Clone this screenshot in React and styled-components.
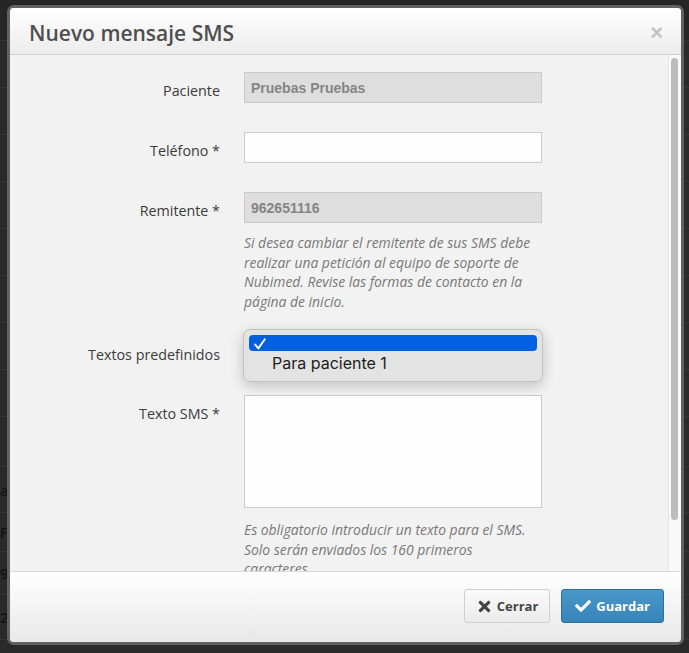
import React from 'react';
import styled, { createGlobalStyle, css } from 'styled-components';
import { FaTimes, FaCheck } from 'react-icons/fa';

const GlobalStyle = createGlobalStyle`
  html, body { margin: 0; padding: 0; height: 100%; overflow: hidden; background: #2a2a2a; }
  #root { height: 100%; }
  *, *::before, *::after { box-sizing: border-box; }
`;

const Page = styled.div`
  position: relative;
  height: 100vh;
  background: #2a2a2a;
  font-family: "Open Sans", sans-serif;
  overflow: hidden;
`;

const TopBar = styled.div`
  height: 41px;
  background: #262626;
  border-bottom: 1px solid #353535;
`;

const BgRow = styled.div`
  height: ${p => p.$h}px;
  border-bottom: 1px solid #363636;
  display: flex;
  align-items: center;
  color: #121212;
  font-size: 15px;
  font-weight: 600;
  white-space: nowrap;
`;

const Modal = styled.div`
  position: absolute;
  top: 5px;
  left: 7px;
  width: 677px;
  height: 640px;
  border: 3px solid #626262;
  border-radius: 7px;
  display: flex;
  flex-direction: column;
  overflow: hidden;
  background: #f2f2f2;
`;

const Header = styled.div`
  flex: none;
  height: 47px;
  display: flex;
  align-items: center;
  justify-content: space-between;
  padding: 3px 18px 0 19px;
  background: linear-gradient(#ffffff, #ececec);
  border-bottom: 1px solid #cecece;
`;

const Title = styled.h4`
  margin: 0;
  font-family: "Open Sans", sans-serif;
  font-size: 21px;
  font-weight: 600;
  line-height: 24px;
  color: #4f4f4f;
`;

const Close = styled.button`
  border: 0;
  background: none;
  padding: 0;
  font-family: "Liberation Sans", Arial, sans-serif;
  font-size: 22px;
  font-weight: 700;
  line-height: 22px;
  color: #c2c2c2;
`;

const Body = styled.div`
  position: relative;
  flex: 1;
  overflow: hidden;
  background: #f2f2f2;
`;

const ScrollTrack = styled.div`
  position: absolute;
  top: 0;
  right: 0;
  bottom: 0;
  width: 13px;
  background: #f9f9f9;
  border-left: 1px solid #e4e4e4;
  padding: 3px 0 0 2px;
`;

const ScrollThumb = styled.div`
  width: 7px;
  height: 462px;
  border-radius: 4px;
  background: #bcbcbc;
`;

const Form = styled.div`
  padding: 17px 0 45px 15px;
`;

const Group = styled.div`
  display: grid;
  grid-template-columns: 195px 298px;
  column-gap: 24px;
  margin-bottom: ${p => p.$mb || 0}px;
`;

const Label = styled.label`
  text-align: right;
  padding-top: 9px;
  font-size: 14.3px;
  line-height: 20px;
  color: #3b3b3b;
`;

const Input = styled.input`
  display: block;
  width: 298px;
  height: 31px;
  margin: 0;
  border: 1px solid #cbcbcb;
  border-radius: 0;
  padding: 0 6px;
  outline: none;
  background: ${p => (p.$locked ? '#dedede' : '#fdfdfd')};
  font-family: "Liberation Sans", Arial, sans-serif;
  font-weight: 700;
  font-size: 14px;
  color: #858585;
`;

const TextArea = styled.textarea`
  display: block;
  width: 298px;
  height: 113px;
  margin: 0;
  border: 1px solid #cbcbcb;
  border-radius: 0;
  background: #fdfdfd;
  resize: none;
  outline: none;
`;

const Help = styled.p`
  margin: ${p => p.$mt}px 0 0;
  font-style: italic;
  font-size: 13.9px;
  line-height: 19.5px;
  color: #787878;
`;

const SelectBox = styled.div`
  position: relative;
  width: 298px;
  height: 31px;
  border: 1px solid #cbcbcb;
  background: #fdfdfd;
`;

const Menu = styled.div`
  position: absolute;
  left: -2px;
  top: -8px;
  width: 300px;
  height: 53px;
  padding: 5px;
  background: #e3e3e3;
  border: 1px solid #c2c2c2;
  border-radius: 7px;
  box-shadow: 0 4px 14px rgba(0, 0, 0, 0.2);
  font-family: Inter, "Liberation Sans", sans-serif;
`;

const MenuItem = styled.div`
  position: relative;
  height: ${p => p.$h}px;
  line-height: ${p => p.$h}px;
  border-radius: 4px;
  padding-left: 23px;
  font-size: 16px;
  background: ${p => (p.$active ? '#0060df' : 'transparent')};
  color: ${p => (p.$active ? '#ffffff' : '#1d1d1d')};
`;

const Tick = styled.svg`
  position: absolute;
  left: 5px;
  top: 3px;
`;

const Footer = styled.div`
  flex: none;
  height: 71px;
  border-top: 1px solid #d8d8d8;
  background: linear-gradient(#ffffff, #e8e8e8);
  display: flex;
  justify-content: flex-end;
  align-items: flex-start;
  gap: 11px;
  padding: 17px 17px 0 0;
`;

const Button = styled.button`
  height: 34px;
  padding: 0 ${p => (p.$primary ? 13 : 11)}px;
  border-radius: 3px;
  display: inline-flex;
  align-items: center;
  gap: ${p => (p.$primary ? 5 : 4)}px;
  font-family: "Open Sans", sans-serif;
  font-weight: 700;
  font-size: 13px;
  ${p =>
    p.$primary
      ? css`
          background: linear-gradient(#4898cb, #3884b8);
          border: 1px solid #2f6f9c;
          color: #ffffff;
        `
      : css`
          background: linear-gradient(#fafafa, #ebebeb);
          border: 1px solid #cfcfcf;
          color: #444444;
        `}
`;

export default function App() {
  return (
    <Page>
      <GlobalStyle />
      <TopBar />
      {[47, 47, 47, 47, 47, 47, 47, 47, 50].map((h, i) => (
        <BgRow key={i} $h={h} />
      ))}
      <BgRow $h={46}>ac</BgRow>
      <BgRow $h={39}>Fe</BgRow>
      <BgRow $h={43}>9</BgRow>
      <BgRow $h={45}>2</BgRow>

      <Modal>
        <Header>
          <Title>Nuevo mensaje SMS</Title>
          <Close>×</Close>
        </Header>
        <Body>
          <Form>
            <Group $mb={29}>
              <Label>Paciente</Label>
              <Input $locked readOnly value="Pruebas Pruebas" />
            </Group>
            <Group $mb={29}>
              <Label>Teléfono *</Label>
              <Input readOnly value="" />
            </Group>
            <Group $mb={25}>
              <Label>Remitente *</Label>
              <div>
                <Input $locked readOnly value="962651116" />
                <Help $mt={10}>
                  Si desea cambiar el remitente de sus SMS debe realizar una petición al equipo de
                  soporte de Nubimed. Revise las formas de contacto en la página de inicio.
                </Help>
              </div>
            </Group>
            <Group $mb={28}>
              <Label>Textos predefinidos</Label>
              <SelectBox>
                <Menu>
                  <MenuItem $active $h={16}>
                    <Tick width="12" height="12" viewBox="0 0 12 12">
                      <path d="M1.2 6.6 L4.4 10.4 L10.8 1.2" fill="none" stroke="#fff" strokeWidth="1.9" strokeLinecap="round" strokeLinejoin="round" />
                    </Tick>
                  </MenuItem>
                  <MenuItem $h={24}>Para paciente 1</MenuItem>
                </Menu>
              </SelectBox>
            </Group>
            <Group>
              <Label>Texto SMS *</Label>
              <div>
                <TextArea readOnly />
                <Help $mt={12}>
                  Es obligatorio introducir un texto para el SMS. Solo serán enviados los 160 primeros
                  <br />
                  caracteres.
                </Help>
              </div>
            </Group>
          </Form>
          <ScrollTrack>
            <ScrollThumb />
          </ScrollTrack>
        </Body>
        <Footer>
          <Button>
            <FaTimes size={17} />
            Cerrar
          </Button>
          <Button $primary>
            <FaCheck size={16} />
            Guardar
          </Button>
        </Footer>
      </Modal>
    </Page>
  );
}
